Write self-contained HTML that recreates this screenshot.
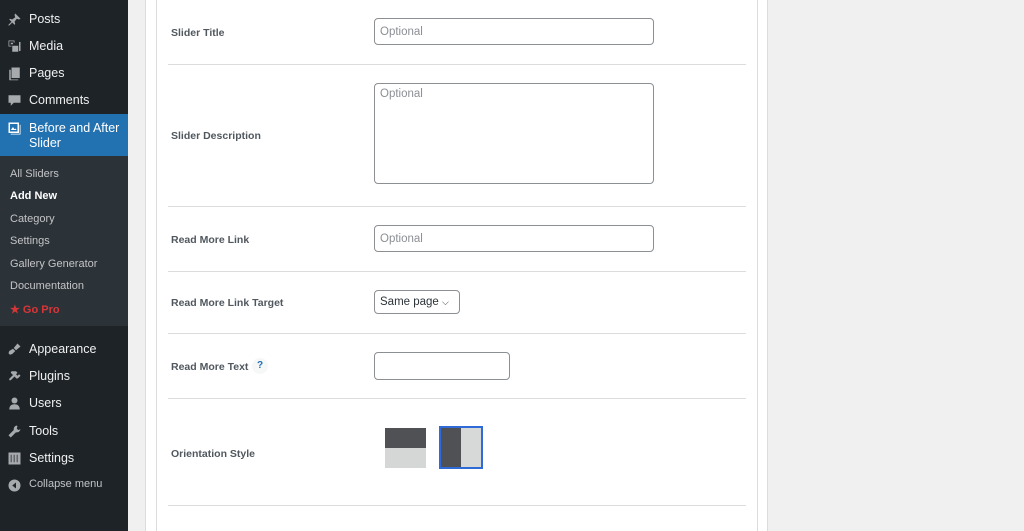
<!DOCTYPE html>
<html style="height:531px;overflow:hidden"><head><style>
*{box-sizing:border-box;margin:0;padding:0}
body{width:1024px;height:531px;overflow:hidden;background:#f0f0f1;font-family:"Liberation Sans",sans-serif;position:relative}
#sb{position:absolute;left:0;top:0;width:128px;height:531px;background:#1d2327}
.mi{position:absolute;left:0;width:128px;color:#f0f0f1;font-size:12.5px}
.mi svg{position:absolute;left:7px;width:15px;height:15px;fill:#a7aaad}
.mi span{position:absolute;left:29px}
#act{position:absolute;top:114px;left:0;width:128px;height:42px;background:#2271b1}
#sub{position:absolute;top:156px;left:0;width:128px;height:170px;background:#2c3338}
.si{position:absolute;left:10px;font-size:11px;color:#c3c4c7}
#outer{position:absolute;left:145px;top:-2px;width:623px;height:540px;background:#fff;border:1px solid #dcdcde}
#inner{position:absolute;left:156px;top:-2px;width:602px;height:540px;background:#fff;border:1px solid #dcdcde}
.hr{position:absolute;left:168px;width:578px;height:1px;background:#dcdcde}
.lb{position:absolute;left:171px;font-size:10.5px;font-weight:bold;color:#50575e}
.in{position:absolute;border:1px solid #8c8f94;border-radius:4px;background:#fff;font-size:11.5px;color:#8c8f94;padding-left:5px}
</style></head><body>
<div id="sb">
<div class="mi" style="top:12px"><svg viewBox="0 0 20 20" style="top:0"><path d="M11 2l7 7-2 1-3-1-3 4 1 3-1 1-3-3-4 4H2v-1l4-4-3-3 1-1 3 1 4-3-1-3z"/></svg><span>Posts</span></div>
<div class="mi" style="top:39px"><svg viewBox="0 0 20 20" style="top:0"><path d="M2 2h8v3h-1V3H3v6h3v1H2zM5 5h3v2H5zM7 9h8v8H7zM16 4h2v12h-2z"/></svg><span>Media</span></div>
<div class="mi" style="top:66px"><svg viewBox="0 0 20 20" style="top:0"><path d="M6 2h11v14H6zM3 5h2v13h10v1H3z"/></svg><span>Pages</span></div>
<div class="mi" style="top:93px"><svg viewBox="0 0 20 20" style="top:0"><path d="M2 3h16v10H9l-4 4v-4H2z"/></svg><span>Comments</span></div>
<div id="act"></div>
<div style="position:absolute;left:122px;top:129px;width:0;height:0;border:6px solid transparent;border-right-color:#f0f0f1"></div>
<div class="mi" style="top:121px;color:#fff;line-height:15px"><svg viewBox="0 0 20 20" style="top:0;fill:#fff"><path d="M2 2h14v14H2zM4 4v10h10V4zM5 12l3-4 2 3 1-1 2 2zM18 5v13H5v-1h12V5z"/></svg><span>Before and After<br>Slider</span></div>
<div id="sub"></div>
<div class="si" style="top:168px">All Sliders</div>
<div class="si" style="top:190px;color:#fff;font-weight:bold">Add New</div>
<div class="si" style="top:213px">Category</div>
<div class="si" style="top:235px">Settings</div>
<div class="si" style="top:258px">Gallery Generator</div>
<div class="si" style="top:280px">Documentation</div>
<div class="si" style="top:303px;color:#d63638;font-weight:bold">★ Go Pro</div>
<div class="mi" style="top:342px"><svg viewBox="0 0 20 20" style="top:0"><path d="M14 2l4 4-6 5-3-3zM8 9l3 3-4 4-3 1-2-2 1-3z"/></svg><span>Appearance</span></div>
<div class="mi" style="top:369px"><svg viewBox="0 0 20 20" style="top:0"><path d="M12 3l2 2-2 2 2 2 2-2 2 2-3 3-2 1-3-3-5 5H3v-2l5-5-3-3 1-2z"/></svg><span>Plugins</span></div>
<div class="mi" style="top:396px"><svg viewBox="0 0 20 20" style="top:0"><circle cx="10" cy="6" r="4"/><path d="M3 18c0-5 3-7 7-7s7 2 7 7z"/></svg><span>Users</span></div>
<div class="mi" style="top:424px"><svg viewBox="0 0 20 20" style="top:0"><path d="M13 2a5 5 0 0 0-4 6L2 15l3 3 7-7a5 5 0 0 0 6-4l-3 1-2-2 1-3z"/></svg><span>Tools</span></div>
<div class="mi" style="top:451px"><svg viewBox="0 0 20 20" style="top:0"><path d="M2 2h16v16H2zM5 5v10h1V5zm4 0v10h1V5zm4 0v10h1V5z"/></svg><span>Settings</span></div>
<div class="mi" style="top:478px;color:#c3c4c7;font-size:11px"><svg viewBox="0 0 20 20" style="top:0"><circle cx="10" cy="10" r="8"/><path d="M12 6v8l-5-4z" fill="#1d2327"/></svg><span>Collapse menu</span></div>
</div>
<div id="outer"></div><div id="inner"></div>
<div class="lb" style="top:27px">Slider Title</div>
<div class="in" style="left:374px;top:18px;width:280px;height:27px;line-height:27px">Optional</div>
<div class="hr" style="top:64px"></div>
<div class="lb" style="top:130px">Slider Description</div>
<div class="in" style="left:374px;top:83px;width:280px;height:101px;padding-top:4px">Optional</div>
<div class="hr" style="top:206px"></div>
<div class="lb" style="top:234px">Read More Link</div>
<div class="in" style="left:374px;top:225px;width:280px;height:27px;line-height:27px">Optional</div>
<div class="hr" style="top:271px"></div>
<div class="lb" style="top:297px">Read More Link Target</div>
<div class="in" style="left:374px;top:290px;width:86px;height:24px;line-height:23px;color:#2c3338">Same page <span style="font-size:9px">⌵</span></div>
<div class="hr" style="top:333px"></div>
<div class="lb" style="top:361px">Read More Text</div>
<div style="position:absolute;left:252px;top:358px;width:16px;height:16px;border-radius:50%;background:#f6f7f7;color:#2271b1;font-size:10px;font-weight:bold;text-align:center;line-height:16px">?</div>
<div class="in" style="left:374px;top:352px;width:136px;height:28px"></div>
<div class="hr" style="top:398px"></div>
<div class="lb" style="top:448px">Orientation Style</div>
<div style="position:absolute;left:385px;top:428px;width:41px;height:20px;background:#505154"></div>
<div style="position:absolute;left:385px;top:448px;width:41px;height:20px;background:#d5d6d6"></div>
<div style="position:absolute;left:439px;top:426px;width:44px;height:43px;border:2px solid #2e6bd9;background:#d7d8d8"><div style="width:20px;height:100%;background:#505154"></div></div>
<div class="hr" style="top:505px"></div>
</body></html>
